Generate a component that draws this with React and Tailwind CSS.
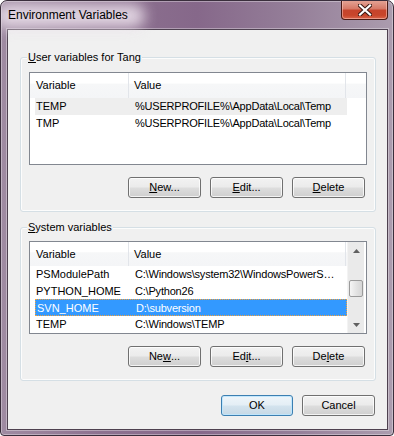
import { Fragment } from 'react';

const font = "font-['Liberation_Sans',Arial,sans-serif]";

// Windows 7 style push button
function Btn({ children, wide = true, isDefault = false }) {
    const base = "h-[21px] rounded-[3px] border flex items-center justify-center text-[11px] text-black";
    const normal = "border-[#707070] bg-[linear-gradient(#f2f2f2_0%,#ebebeb_48%,#dddddd_52%,#cfcfcf_100%)] shadow-[inset_0_0_0_1px_rgba(255,255,255,0.75)]";
    const def = "border-[#3c7fb1] bg-[linear-gradient(#eef5fa_0%,#e4eef5_48%,#d3e3ee_52%,#c6d8e5_100%)] shadow-[inset_0_0_0_1px_rgba(190,230,253,0.9)]";
    return (
        <div className={`${base} ${wide ? 'w-[73px]' : 'w-[72px]'} ${isDefault ? def : normal}`}>
            {children}
        </div>
    );
}

function Mn({ children }) {
    return <span className="underline underline-offset-[1px]">{children}</span>;
}

function Header({ full }) {
    return (
        <div className="flex h-[25px] bg-[linear-gradient(#ffffff_0%,#ffffff_40%,#f6f7f8_45%,#f4f5f7_100%)] text-[11px] text-black">
            <div className="w-[99px] pl-[6px] flex items-center border-r border-[#e2e5ea]">Variable</div>
            <div className="w-[217px] pl-[5px] flex items-center border-r border-[#e2e5ea]">Value</div>
            {full && <div className="flex-1" />}
        </div>
    );
}

function Row({ name, value, state }) {
    const base = "ml-[5px] w-[312px] h-[17px] flex items-center text-[11px] whitespace-nowrap";
    let cls = "text-black";
    if (state === 'hover') cls = "bg-[#eeeeee] text-black";
    if (state === 'sel') cls = "bg-[#3399ff] text-white border border-dotted border-[#f4a23c]";
    return (
        <div className={`${base} ${cls}`}>
            <div className="w-[99px] pl-[1px] overflow-hidden">{name}</div>
            <div className="flex-1 pl-[1px] overflow-hidden tracking-[-0.2px]">{value}</div>
        </div>
    );
}

function Arrow({ up }) {
    return (
        <div className="h-[17px] flex items-center justify-center">
            <svg width="7" height="4" viewBox="0 0 7 4">
                {up ? <path d="M0 4 L3.5 0 L7 4 Z" fill="#606060" /> : <path d="M0 0 L3.5 4 L7 0 Z" fill="#606060" />}
            </svg>
        </div>
    );
}

function Scrollbar() {
    return (
        <div className="w-[17px] flex flex-col bg-[#eaeaea] border-l border-[#f3f3f3]">
            <Arrow up />
            <div className="flex-1 flex flex-col">
                <div className="h-[21px]" />
                <div className="mx-[1px] h-[17px] rounded-[2px] border border-[#9a9a9a] bg-[linear-gradient(to_right,#f5f5f5,#e4e4e4_50%,#d6d6d6)]" />
            </div>
            <Arrow />
        </div>
    );
}

function Group({ title, children, first }) {
    return (
        <div className={`ml-[12px] w-[356px] border border-[#d5dfe5] rounded-[3px] shadow-[inset_0_0_0_1px_rgba(255,255,255,0.8)] ${first ? 'mt-[27px]' : 'mt-[15px]'}`}>
            <div className="-mt-[8px] ml-[6px] w-fit px-[1px] bg-[#f0f0f0] leading-[15px] text-[11px] text-black">{title}</div>
            {children}
        </div>
    );
}

function ButtonRow({ second }) {
    return (
        <div className="mt-[12px] pr-[10px] flex justify-end gap-[9px]">
            {second ? (
                <Fragment>
                    <Btn>Ne<Mn>w</Mn>...</Btn>
                    <Btn>Ed<Mn>i</Mn>t...</Btn>
                    <Btn>De<Mn>l</Mn>ete</Btn>
                </Fragment>
            ) : (
                <Fragment>
                    <Btn><Mn>N</Mn>ew...</Btn>
                    <Btn><Mn>E</Mn>dit...</Btn>
                    <Btn><Mn>D</Mn>elete</Btn>
                </Fragment>
            )}
        </div>
    );
}

export default function App() {
    return (
        <div className={`w-[394px] h-[436px] bg-white ${font}`}>
            <div className="w-[394px] h-[436px] flex flex-col rounded-t-[7px] rounded-b-[4px] border border-[#3a2e3c] shadow-[inset_0_0_0_1px_rgba(255,255,255,0.35)] bg-[linear-gradient(to_right,#9f8ba2_0%,#8d7290_25%,#86688a_50%,#957f99_75%,#ab9cae_100%)] overflow-hidden">
                {/* Title bar */}
                <div className="h-[28px] flex justify-between">
                    <div className="relative pl-[7px] flex items-center">
                        <span className="absolute left-[-6px] top-[3px] w-[150px] h-[24px] rounded-full bg-[#eadfea] opacity-90 blur-[7px]" />
                        <span className="relative text-[12px] text-black">Environment Variables</span>
                    </div>
                    <div className="-mt-[1px] mr-[5px] w-[47px] h-[20px] rounded-b-[4px] border border-[#4a1a14] border-t-0 bg-[linear-gradient(#e5a799_0%,#d67a68_45%,#c6442c_55%,#c8452a_80%,#d9654b_100%)] shadow-[inset_0_0_0_1px_rgba(255,210,200,0.5)] flex items-center justify-center">
                        <svg width="14" height="12" viewBox="0 0 14 12">
                            <path d="M2 1.5 L12 10.5 M12 1.5 L2 10.5" stroke="#3c1a14" strokeWidth="4.2" strokeLinecap="square" />
                            <path d="M2 1.5 L12 10.5 M12 1.5 L2 10.5" stroke="#ffffff" strokeWidth="2.2" strokeLinecap="square" />
                        </svg>
                    </div>
                </div>

                {/* Client area */}
                <div className="ml-[6px] mr-[5px] mb-[5px] h-[401px] border border-[#4e4150] shadow-[0_0_0_1px_rgba(255,255,255,0.35)] bg-[#f0f0f0] flex flex-col">
                    <Group title={<span><Mn>U</Mn>ser variables for Tang</span>} first>
                        <div className="mt-[7px] ml-[8px] w-[338px] h-[93px] border border-[#828790] bg-white overflow-hidden">
                            <Header full />
                            <Row name="TEMP" value="%USERPROFILE%\AppData\Local\Temp" state="hover" />
                            <Row name="TMP" value="%USERPROFILE%\AppData\Local\Temp" />
                        </div>
                        <ButtonRow />
                        <div className="h-[13px]" />
                    </Group>

                    <Group title={<span><Mn>S</Mn>ystem variables</span>}>
                        <div className="mt-[6px] ml-[8px] w-[338px] h-[93px] border border-[#828790] bg-white overflow-hidden flex">
                            <div className="w-[317px] flex flex-col">
                                <Header />
                                <Row name="PSModulePath" value="C:\Windows\system32\WindowsPowerS…" />
                                <Row name="PYTHON_HOME" value="C:\Python26" />
                                <Row name="SVN_HOME" value="D:\subversion" state="sel" />
                                <Row name="TEMP" value="C:\Windows\TEMP" />
                            </div>
                            <Scrollbar />
                        </div>
                        <ButtonRow second />
                        <div className="h-[13px]" />
                    </Group>

                    <div className="mt-[14px] pr-[12px] flex justify-end gap-[9px]">
                        <Btn wide={false} isDefault>OK</Btn>
                        <Btn>Cancel</Btn>
                    </div>
                </div>
            </div>
        </div>
    );
}
